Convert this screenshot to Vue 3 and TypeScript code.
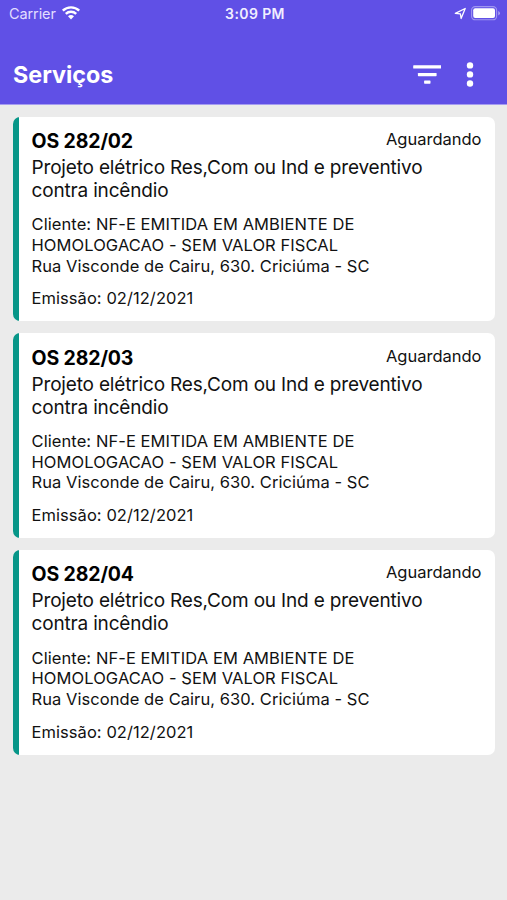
<script setup lang="ts">
interface ServiceOrder {
  id: string
  status: string
  description: string
  client: string
  address: string
  issued: string
}

const orders: ServiceOrder[] = ['282/02', '282/03', '282/04'].map((id) => ({
  id,
  status: 'Aguardando',
  description: 'Projeto elétrico Res,Com ou Ind e preventivo contra incêndio',
  client: 'NF-E EMITIDA EM AMBIENTE DE HOMOLOGACAO - SEM VALOR FISCAL',
  address: 'Rua Visconde de Cairu, 630. Criciúma - SC',
  issued: '02/12/2021',
}))
</script>

<template>
  <div class="screen">
    <header class="header">
      <div class="status-bar">
        <div class="carrier">
          <span class="carrier-name">Carrier</span>
          <svg class="wifi" width="20" height="15" viewBox="0 0 20 15">
            <g fill="none" stroke="#fff" stroke-width="2.4">
              <path d="M1.8 5.7a11.8 11.8 0 0 1 16.4 0" />
              <path d="M4.8 8.9a7.5 7.5 0 0 1 10.4 0" />
            </g>
            <path d="M7 11.3a4.4 4.4 0 0 1 6 0L10 14.4z" fill="#fff" />
          </svg>
        </div>
        <span class="clock">3:09 PM</span>
        <div class="indicators">
          <svg width="13" height="13" viewBox="0 0 13 13">
            <path d="M1.3 6.3 11.2 1.5 7.1 11.5 6.4 6.8z" fill="none" stroke="#fff" stroke-width="1.3" stroke-linejoin="round" />
          </svg>
          <svg class="battery" width="30" height="15" viewBox="0 0 30 15">
            <rect x=".6" y=".6" width="25" height="13.2" rx="3.6" fill="none" stroke="#fff" stroke-opacity=".4" stroke-width="1.1" />
            <rect x="2.2" y="2.3" width="21.8" height="9.8" rx="2" fill="#fff" />
            <path d="M27.3 5v4.5q1.6-.7 1.6-2.25T27.3 5z" fill="#fff" fill-opacity=".5" />
          </svg>
        </div>
      </div>
      <div class="toolbar">
        <h1 class="title">Serviços</h1>
        <button class="action" aria-label="Filtrar">
          <svg width="28" height="20" viewBox="0 0 28 20" fill="#fff">
            <rect x="0.2" y="0.2" width="28" height="3.3" rx=".6" />
            <rect x="4.9" y="7.9" width="18.7" height="3.3" rx=".6" />
            <rect x="11.1" y="15.4" width="6.4" height="3.3" rx=".6" />
          </svg>
        </button>
        <button class="action" aria-label="Mais opções">
          <svg width="8" height="26" viewBox="0 0 8 26" fill="#fff">
            <circle cx="4" cy="3.4" r="3.2" />
            <circle cx="4" cy="12.4" r="3.2" />
            <circle cx="4" cy="21.5" r="3.2" />
          </svg>
        </button>
      </div>
    </header>
    <main class="list">
      <article v-for="order in orders" :key="order.id" class="card">
        <div class="card-head">
          <h2 class="number">OS {{ order.id }}</h2>
          <span class="status">{{ order.status }}</span>
        </div>
        <p class="description">{{ order.description }}</p>
        <div class="details">
          <p class="client">Cliente: {{ order.client }}</p>
          <p class="address">{{ order.address }}</p>
        </div>
        <p class="issued">Emissão: {{ order.issued }}</p>
      </article>
    </main>
  </div>
</template>

<style>
body {
  background: #ebebeb;
}
</style>

<style scoped>
.screen {
  min-height: 900px;
  background: #ebebeb;
  color: #111;
  font-family: Inter, 'Liberation Sans', sans-serif;
}

.header {
  box-sizing: border-box;
  height: 105px;
  background: #6050e6;
  border-bottom: 1px solid #a59cf0;
  color: #fff;
}

.status-bar {
  display: grid;
  grid-template-columns: 1fr auto 1fr;
  align-items: center;
  height: 27px;
  padding: 0 6px 0 9px;
}

.carrier,
.indicators {
  display: flex;
  align-items: center;
}

.carrier {
  gap: 5px;
}

.carrier-name {
  font-size: 14.5px;
  letter-spacing: -0.1px;
  color: #e2deff;
}

.wifi {
  margin-top: -2px;
}

.clock {
  font-size: 14px;
  font-weight: 600;
  letter-spacing: 0.4px;
  color: #f0eeff;
}

.indicators {
  justify-content: flex-end;
  gap: 4px;
}

.toolbar {
  display: flex;
  align-items: center;
  height: 77px;
  padding: 20px 33px 2px 13px;
  box-sizing: border-box;
}

.title {
  flex: 1;
  margin: 0;
  font-size: 23.3px;
  line-height: 30px;
  font-weight: 700;
}

.action {
  display: flex;
  padding: 0;
  border: 0;
  background: none;
}

.action + .action {
  margin-left: 25px;
}

.list {
  display: flex;
  flex-direction: column;
  gap: 12.3px;
  padding: 11.8px 12px 12px 13px;
}

.card {
  box-sizing: border-box;
  height: 204.4px;
  padding: 12.2px 13.5px 0 18.5px;
  background: linear-gradient(to right, #079688 6.5px, #fff 6.5px);
  border-radius: 7px;
}

.card p {
  margin: 0;
}

.card-head {
  display: flex;
  justify-content: space-between;
  height: 27px;
}

.number {
  margin: 0;
  color: #000;
  font-size: 19.5px;
  line-height: 24.6px;
  font-weight: 700;
  letter-spacing: -0.13px;
}

.status {
  font-size: 16.5px;
  line-height: 21.6px;
}

.description {
  font-size: 19px;
  line-height: 23px;
  letter-spacing: -0.17px;
}

.details {
  margin-top: 12.5px;
  width: 350px;
  font-size: 16.5px;
  line-height: 20.6px;
  letter-spacing: 0.06px;
}

.client {
  letter-spacing: 0.08px;
}

.card .issued {
  margin-top: 12.2px;
  font-size: 16.5px;
  line-height: 21px;
  letter-spacing: 0.06px;
}
</style>
